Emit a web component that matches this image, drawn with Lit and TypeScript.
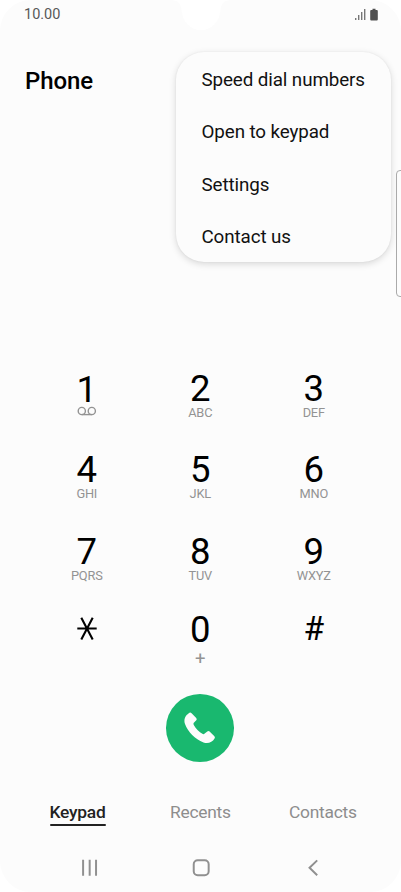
import { LitElement, html, css, nothing } from "lit";
import { customElement } from "lit/decorators.js";
import { classMap } from "lit/directives/class-map.js";

const MENU = ["Speed dial numbers", "Open to keypad", "Settings", "Contact us"];
const KEYS: [string, string][] = [
  ["1", "voicemail"], ["2", "ABC"], ["3", "DEF"],
  ["4", "GHI"], ["5", "JKL"], ["6", "MNO"],
  ["7", "PQRS"], ["8", "TUV"], ["9", "WXYZ"],
  ["*", ""], ["0", "+"], ["#", ""],
];
const TABS = ["Keypad", "Recents", "Contacts"];

@customElement("dial-key")
class DialKey extends LitElement {
  static properties = { digit: {}, sub: {} };
  declare digit: string;
  declare sub: string;

  static styles = css`
    :host { display: flex; flex-direction: column; align-items: center; }
    .digit { font-size: 36.5px; line-height: 34px; height: 34px; color: #000; }
    .low { line-height: 36px; }
    .hash { font-size: 33.5px; line-height: 33px; }
    .sub { font-size: 12.8px; line-height: 13px; letter-spacing: -.2px; color: #939393; }
    .plus { font-size: 18.5px; line-height: 20px; margin-top: 3px; }
    svg { display: block; fill: none; }
    .vm { stroke: #939393; stroke-width: 1.4; margin-top: .5px; }
    .star { stroke: #000; stroke-width: 2.1; margin-top: 4.5px; }
  `;

  render() {
    if (this.digit === "*") {
      return html`<svg class="star" width="22" height="24" viewBox="0 0 22 24">
        <path d="M1.3 11.5H20.7M5.3 .8L16.7 22.4M16.7 .8L5.3 22.4" /></svg>`;
    }
    const low = this.digit === "1" || this.digit === "0";
    return html`
      <div class=${classMap({ digit: true, low, hash: this.digit === "#" })}>${this.digit}</div>
      ${this.sub === "voicemail"
        ? html`<svg class="vm" width="20" height="12" viewBox="0 0 20 12">
            <circle cx="4.8" cy="5" r="3.6" /><circle cx="14.8" cy="5" r="3.6" /><path d="M4.8 8.6H14.8" /></svg>`
        : this.sub
          ? html`<div class=${classMap({ sub: true, plus: this.sub === "+" })}>${this.sub}</div>`
          : nothing}
    `;
  }
}

@customElement("app-root")
class AppRoot extends LitElement {
  static styles = css`
    :host {
      display: block; width: 401px; height: 892px; background: #fff;
      font-family: Roboto, "Liberation Sans", sans-serif;
    }
    svg { display: block; }
    .phone {
      position: relative; box-sizing: border-box; height: 892px; overflow: hidden;
      display: flex; flex-direction: column;
      background: #fcfcfc; border-radius: 31px;
    }
    .notch { position: absolute; left: 171px; top: 0; fill: #fff; }
    .status {
      display: flex; justify-content: space-between; align-items: flex-start;
      height: 30px; box-sizing: border-box; padding: 6px 23px 0 24px;
    }
    .time { font-size: 14.5px; line-height: 17px; color: #585858; }
    .indicators { display: flex; gap: 4px; padding-top: 2px; }
    h1 { margin: 0; padding: 37px 0 0 25px; font-size: 24px; line-height: 28px; font-weight: 500; letter-spacing: -.1px; color: #000; }
    .menu {
      position: absolute; left: 176px; top: 52px; width: 214.5px; height: 210px;
      box-sizing: border-box; padding: 2px 0 0 25.5px; border-radius: 28px;
      background: #fcfcfc; box-shadow: 0 2px 7px rgba(0,0,0,.15), 0 0 2px rgba(0,0,0,.06);
    }
    .item { height: 52.4px; line-height: 52.4px; font-size: 18.8px; letter-spacing: -.1px; color: #111; white-space: nowrap; }
    .edge {
      position: absolute; left: 396px; top: 170px; width: 12px; height: 127px; box-sizing: border-box;
      border: 1px solid #aaa; border-radius: 4px;
    }
    .pad {
      display: grid; grid-template-columns: repeat(3, 113.5px);
      grid-template-rows: 81.6px 81.6px 77px 72px;
      margin: 277px 0 0 30px;
    }
    .call {
      width: 68px; height: 68px; margin: 10px 0 0 166px; border-radius: 50%; background: #19b86f;
      display: grid; place-items: center; fill: #fcfcfc;
    }
    .call svg { margin: 1px 0 0 0; }
    .tabs { display: grid; grid-template-columns: 120.5px 119px auto; padding: 39px 0 0 49.5px; }
    .tab { font-size: 17.4px; line-height: 22px; letter-spacing: -.25px; color: #8d8d8d; }
    .active { color: #222; font-weight: 500; }
    .active::after { content: ""; display: block; width: 56px; height: 2.5px; margin-top: 1px; border-radius: 1px; background: #222; }
    .nav { fill: none; stroke: #909090; stroke-width: 2; }
  `;

  render() {
    return html`
      <div class="phone">
        <svg class="notch" width="60" height="31" viewBox="0 0 60 31">
          <path d="M0 0H60C53 0 50 4 49.5 10C48.5 22 41 30 30 30S11.5 22 10.5 10C10 4 7 0 0 0Z" />
        </svg>
        <div class="status">
          <div class="time">10.00</div>
          <div class="indicators">
            <svg width="12" height="13" viewBox="0 0 12 13" fill="#777">
              <path d="M1 10h1.4v2H1zM4 7h1.4v5H4zM7 4h1.4v8H7zM10 1h1.4v11H10z" />
            </svg>
            <svg width="8" height="13" viewBox="0 0 8 13" fill="#505050">
              <path d="M2.5 .8H5.5V2H6.8Q7.8 2 7.8 3V11.2Q7.8 12.4 6.8 12.4H1.2Q.2 12.4 .2 11.2V3Q.2 2 1.2 2H2.5Z" />
            </svg>
          </div>
        </div>
        <h1>Phone</h1>
        <div class="pad">
          ${KEYS.map(([d, s]) => html`<dial-key .digit=${d} .sub=${s}></dial-key>`)}
        </div>
        <div class="call">
          <svg width="34" height="34" viewBox="0 0 34 34">
            <path d="M5 3L6 2Q7.3 1 8.6 2.2L13.2 6.9Q14.3 8 13.3 9.2L10.6 12Q10.2 13 10.8 14C12.5 17.5 16 21 19.8 23Q20.8 23.4 21.7 22.6L24.3 20.4Q25.5 19.5 26.6 20.5L31.4 25.3Q32.5 26.5 31.4 27.8C29.5 31.3 25 33 20.5 31.5C12 28 5 21 2 13C.6 9 2 5 5 3Z" />
          </svg>
        </div>
        <div class="tabs">
          ${TABS.map((t, i) => html`<div class=${classMap({ tab: true, active: i === 0 })}>${t}</div>`)}
        </div>
        <svg class="nav" width="401" height="66" viewBox="0 826 401 66">
          <path d="M82.6 860V876M89.2 860V876M95.6 860V876" />
          <rect x="193.7" y="860.5" width="15" height="15" rx="4" />
          <path d="M317.7 860.5L310 868L317.7 875.5" />
        </svg>
        <div class="menu">
          ${MENU.map((m) => html`<div class="item">${m}</div>`)}
        </div>
        <div class="edge"></div>
      </div>
    `;
  }
}
